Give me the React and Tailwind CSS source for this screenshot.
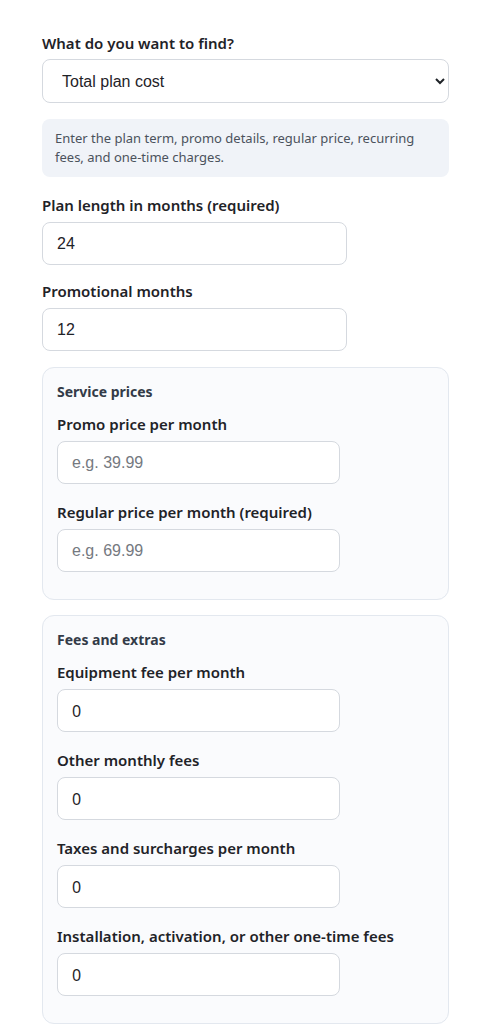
import { useState } from 'react';

const labelCls = 'block text-[15px] leading-5 font-semibold text-[#1f2328] mb-[7px]';
const inputCls =
  'block w-3/4 h-[43px] rounded-lg border border-[#d5d9df] bg-white px-[14px] text-base text-[#1f2328] placeholder:text-[#75797f] outline-none';

function Field({ label, value, placeholder, numberFont, inCard }) {
  const [val, setVal] = useState(value ?? '');
  return (
    <div className={inCard ? 'mb-[18px]' : 'mb-4'}>
      <label className={labelCls}>{label}</label>
      <input
        type="text"
        value={val}
        placeholder={placeholder}
        onChange={(e) => setVal(e.target.value)}
        className={`${inputCls} ${numberFont ? "font-['Noto_Sans',sans-serif]" : "font-['Liberation_Sans',Arial,sans-serif]"}`}
      />
    </div>
  );
}

function Card({ title, children }) {
  return (
    <fieldset className="mb-[15px] rounded-xl border border-[#e3e8ef] bg-[#fafbfd] px-[14px] pt-[14px] pb-[9px]">
      <div className="mb-[13px] text-[14px] leading-[19px] font-bold text-[#333b48]">{title}</div>
      {children}
    </fieldset>
  );
}

export default function App() {
  const [goal, setGoal] = useState('total');

  return (
    <div className="min-h-screen bg-white font-['Noto_Sans',sans-serif]">
      <div className="w-[407px] ml-[42px] pt-[33px]">
        <label className={`${labelCls} !mb-[6px]`}>What do you want to find?</label>
        <select
          value={goal}
          onChange={(e) => setGoal(e.target.value)}
          className="block w-full h-[44px] rounded-lg border border-[#d5d9df] bg-white pl-[15px] pr-2 text-base text-[#1f2328] font-['Liberation_Sans',Arial,sans-serif]"
        >
          <option value="total">Total plan cost</option>
          <option value="monthly">Average monthly cost</option>
        </select>

        <div className="mt-4 mb-[18px] rounded-lg bg-[#f0f3f8] px-[13px] py-[10px] text-[13px] leading-[19px] text-[#4b525c]">
          Enter the plan term, promo details, regular price, recurring fees, and one-time charges.
        </div>

        <Field label="Plan length in months (required)" value="24" />
        <Field label="Promotional months" value="12" />

        <Card title="Service prices">
          <Field inCard label="Promo price per month" placeholder="e.g. 39.99" />
          <Field inCard label="Regular price per month (required)" placeholder="e.g. 69.99" />
        </Card>

        <Card title="Fees and extras">
          <Field inCard label="Equipment fee per month" value="0" numberFont />
          <Field inCard label="Other monthly fees" value="0" numberFont />
          <Field inCard label="Taxes and surcharges per month" value="0" numberFont />
          <Field inCard label="Installation, activation, or other one-time fees" value="0" numberFont />
        </Card>
      </div>
    </div>
  );
}
